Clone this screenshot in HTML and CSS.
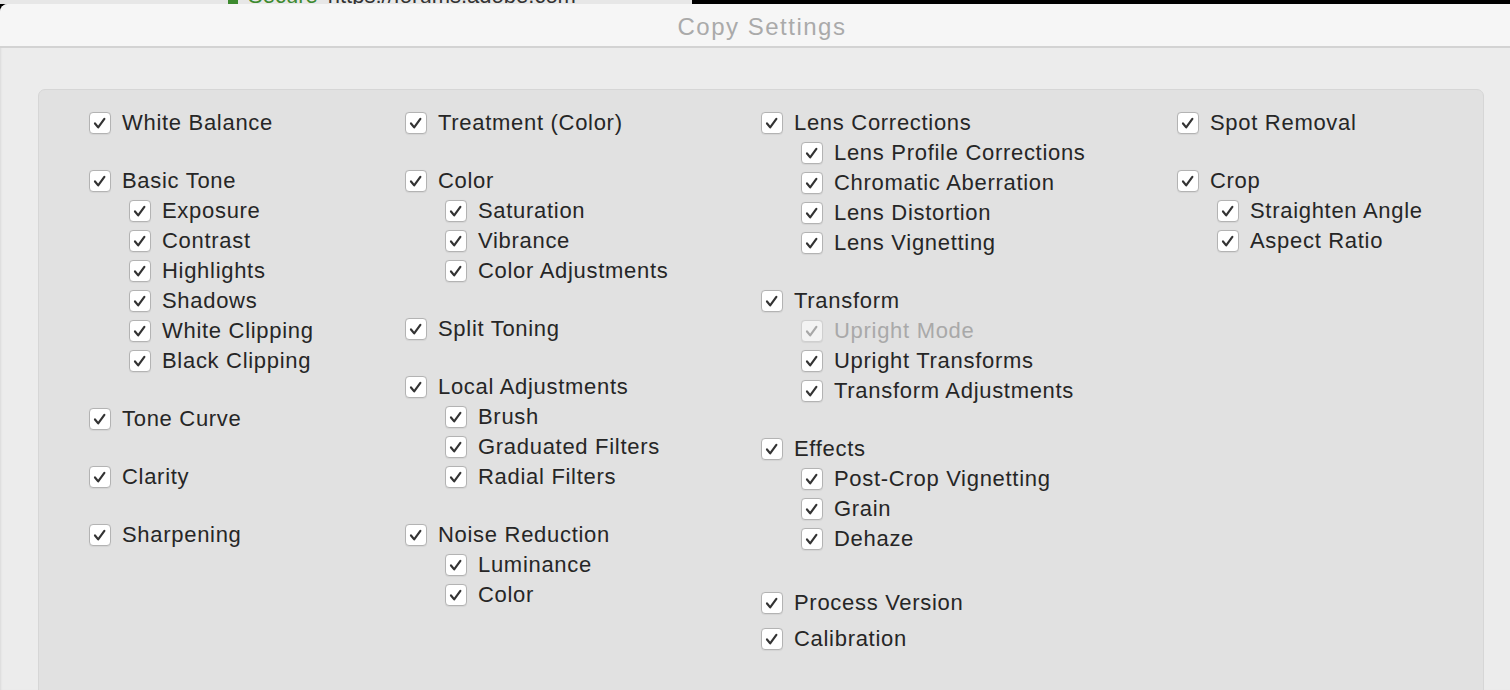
FILE: index.html
```html
<!DOCTYPE html>
<html>
<head>
<meta charset="utf-8">
<link rel="stylesheet" href="styles.css">
<title>Copy Settings</title>
</head>
<body>
<div class="chrome">
  <div class="chrome-left">
    <span class="dot"></span>
    <span class="secure">Secure</span>
    <span class="url">https://forums.adobe.com</span>
  </div>
  <div class="chrome-right"><span class="user">John B. Ellis</span></div>
</div>
<div class="window">
  <div class="titlebar">Copy Settings</div>
  <div class="content">
    <div class="panel">
      <div class="col">
        <div class="group">
          <label class="item"><span class="cb"><svg viewBox="0 0 22 22"><path d="M5.5 11.5 L9 15.8 L15.8 6.5"/></svg></span><span class="lbl">White Balance</span></label>
        </div>
        <div class="group">
          <label class="item"><span class="cb"><svg viewBox="0 0 22 22"><path d="M5.5 11.5 L9 15.8 L15.8 6.5"/></svg></span><span class="lbl">Basic Tone</span></label>
          <div class="sub">
            <label class="item"><span class="cb"><svg viewBox="0 0 22 22"><path d="M5.5 11.5 L9 15.8 L15.8 6.5"/></svg></span><span class="lbl">Exposure</span></label>
            <label class="item"><span class="cb"><svg viewBox="0 0 22 22"><path d="M5.5 11.5 L9 15.8 L15.8 6.5"/></svg></span><span class="lbl">Contrast</span></label>
            <label class="item"><span class="cb"><svg viewBox="0 0 22 22"><path d="M5.5 11.5 L9 15.8 L15.8 6.5"/></svg></span><span class="lbl">Highlights</span></label>
            <label class="item"><span class="cb"><svg viewBox="0 0 22 22"><path d="M5.5 11.5 L9 15.8 L15.8 6.5"/></svg></span><span class="lbl">Shadows</span></label>
            <label class="item"><span class="cb"><svg viewBox="0 0 22 22"><path d="M5.5 11.5 L9 15.8 L15.8 6.5"/></svg></span><span class="lbl">White Clipping</span></label>
            <label class="item"><span class="cb"><svg viewBox="0 0 22 22"><path d="M5.5 11.5 L9 15.8 L15.8 6.5"/></svg></span><span class="lbl">Black Clipping</span></label>
          </div>
        </div>
        <div class="group">
          <label class="item"><span class="cb"><svg viewBox="0 0 22 22"><path d="M5.5 11.5 L9 15.8 L15.8 6.5"/></svg></span><span class="lbl">Tone Curve</span></label>
        </div>
        <div class="group">
          <label class="item"><span class="cb"><svg viewBox="0 0 22 22"><path d="M5.5 11.5 L9 15.8 L15.8 6.5"/></svg></span><span class="lbl">Clarity</span></label>
        </div>
        <div class="group">
          <label class="item"><span class="cb"><svg viewBox="0 0 22 22"><path d="M5.5 11.5 L9 15.8 L15.8 6.5"/></svg></span><span class="lbl">Sharpening</span></label>
        </div>
      </div>

      <div class="col">
        <div class="group">
          <label class="item"><span class="cb"><svg viewBox="0 0 22 22"><path d="M5.5 11.5 L9 15.8 L15.8 6.5"/></svg></span><span class="lbl">Treatment (Color)</span></label>
        </div>
        <div class="group">
          <label class="item"><span class="cb"><svg viewBox="0 0 22 22"><path d="M5.5 11.5 L9 15.8 L15.8 6.5"/></svg></span><span class="lbl">Color</span></label>
          <div class="sub">
            <label class="item"><span class="cb"><svg viewBox="0 0 22 22"><path d="M5.5 11.5 L9 15.8 L15.8 6.5"/></svg></span><span class="lbl">Saturation</span></label>
            <label class="item"><span class="cb"><svg viewBox="0 0 22 22"><path d="M5.5 11.5 L9 15.8 L15.8 6.5"/></svg></span><span class="lbl">Vibrance</span></label>
            <label class="item"><span class="cb"><svg viewBox="0 0 22 22"><path d="M5.5 11.5 L9 15.8 L15.8 6.5"/></svg></span><span class="lbl">Color Adjustments</span></label>
          </div>
        </div>
        <div class="group">
          <label class="item"><span class="cb"><svg viewBox="0 0 22 22"><path d="M5.5 11.5 L9 15.8 L15.8 6.5"/></svg></span><span class="lbl">Split Toning</span></label>
        </div>
        <div class="group">
          <label class="item"><span class="cb"><svg viewBox="0 0 22 22"><path d="M5.5 11.5 L9 15.8 L15.8 6.5"/></svg></span><span class="lbl">Local Adjustments</span></label>
          <div class="sub">
            <label class="item"><span class="cb"><svg viewBox="0 0 22 22"><path d="M5.5 11.5 L9 15.8 L15.8 6.5"/></svg></span><span class="lbl">Brush</span></label>
            <label class="item"><span class="cb"><svg viewBox="0 0 22 22"><path d="M5.5 11.5 L9 15.8 L15.8 6.5"/></svg></span><span class="lbl">Graduated Filters</span></label>
            <label class="item"><span class="cb"><svg viewBox="0 0 22 22"><path d="M5.5 11.5 L9 15.8 L15.8 6.5"/></svg></span><span class="lbl">Radial Filters</span></label>
          </div>
        </div>
        <div class="group">
          <label class="item"><span class="cb"><svg viewBox="0 0 22 22"><path d="M5.5 11.5 L9 15.8 L15.8 6.5"/></svg></span><span class="lbl">Noise Reduction</span></label>
          <div class="sub">
            <label class="item"><span class="cb"><svg viewBox="0 0 22 22"><path d="M5.5 11.5 L9 15.8 L15.8 6.5"/></svg></span><span class="lbl">Luminance</span></label>
            <label class="item"><span class="cb"><svg viewBox="0 0 22 22"><path d="M5.5 11.5 L9 15.8 L15.8 6.5"/></svg></span><span class="lbl">Color</span></label>
          </div>
        </div>
      </div>

      <div class="col">
        <div class="group">
          <label class="item"><span class="cb"><svg viewBox="0 0 22 22"><path d="M5.5 11.5 L9 15.8 L15.8 6.5"/></svg></span><span class="lbl">Lens Corrections</span></label>
          <div class="sub">
            <label class="item"><span class="cb"><svg viewBox="0 0 22 22"><path d="M5.5 11.5 L9 15.8 L15.8 6.5"/></svg></span><span class="lbl">Lens Profile Corrections</span></label>
            <label class="item"><span class="cb"><svg viewBox="0 0 22 22"><path d="M5.5 11.5 L9 15.8 L15.8 6.5"/></svg></span><span class="lbl">Chromatic Aberration</span></label>
            <label class="item"><span class="cb"><svg viewBox="0 0 22 22"><path d="M5.5 11.5 L9 15.8 L15.8 6.5"/></svg></span><span class="lbl">Lens Distortion</span></label>
            <label class="item"><span class="cb"><svg viewBox="0 0 22 22"><path d="M5.5 11.5 L9 15.8 L15.8 6.5"/></svg></span><span class="lbl">Lens Vignetting</span></label>
          </div>
        </div>
        <div class="group">
          <label class="item"><span class="cb"><svg viewBox="0 0 22 22"><path d="M5.5 11.5 L9 15.8 L15.8 6.5"/></svg></span><span class="lbl">Transform</span></label>
          <div class="sub">
            <label class="item disabled"><span class="cb"><svg viewBox="0 0 22 22"><path d="M5.5 11.5 L9 15.8 L15.8 6.5"/></svg></span><span class="lbl">Upright Mode</span></label>
            <label class="item"><span class="cb"><svg viewBox="0 0 22 22"><path d="M5.5 11.5 L9 15.8 L15.8 6.5"/></svg></span><span class="lbl">Upright Transforms</span></label>
            <label class="item"><span class="cb"><svg viewBox="0 0 22 22"><path d="M5.5 11.5 L9 15.8 L15.8 6.5"/></svg></span><span class="lbl">Transform Adjustments</span></label>
          </div>
        </div>
        <div class="group">
          <label class="item"><span class="cb"><svg viewBox="0 0 22 22"><path d="M5.5 11.5 L9 15.8 L15.8 6.5"/></svg></span><span class="lbl">Effects</span></label>
          <div class="sub">
            <label class="item"><span class="cb"><svg viewBox="0 0 22 22"><path d="M5.5 11.5 L9 15.8 L15.8 6.5"/></svg></span><span class="lbl">Post-Crop Vignetting</span></label>
            <label class="item"><span class="cb"><svg viewBox="0 0 22 22"><path d="M5.5 11.5 L9 15.8 L15.8 6.5"/></svg></span><span class="lbl">Grain</span></label>
            <label class="item"><span class="cb"><svg viewBox="0 0 22 22"><path d="M5.5 11.5 L9 15.8 L15.8 6.5"/></svg></span><span class="lbl">Dehaze</span></label>
          </div>
        </div>
        <div class="group group-process">
          <label class="item"><span class="cb"><svg viewBox="0 0 22 22"><path d="M5.5 11.5 L9 15.8 L15.8 6.5"/></svg></span><span class="lbl">Process Version</span></label>
        </div>
        <div class="group group-calib">
          <label class="item"><span class="cb"><svg viewBox="0 0 22 22"><path d="M5.5 11.5 L9 15.8 L15.8 6.5"/></svg></span><span class="lbl">Calibration</span></label>
        </div>
      </div>

      <div class="col">
        <div class="group">
          <label class="item"><span class="cb"><svg viewBox="0 0 22 22"><path d="M5.5 11.5 L9 15.8 L15.8 6.5"/></svg></span><span class="lbl">Spot Removal</span></label>
        </div>
        <div class="group">
          <label class="item"><span class="cb"><svg viewBox="0 0 22 22"><path d="M5.5 11.5 L9 15.8 L15.8 6.5"/></svg></span><span class="lbl">Crop</span></label>
          <div class="sub">
            <label class="item"><span class="cb"><svg viewBox="0 0 22 22"><path d="M5.5 11.5 L9 15.8 L15.8 6.5"/></svg></span><span class="lbl">Straighten Angle</span></label>
            <label class="item"><span class="cb"><svg viewBox="0 0 22 22"><path d="M5.5 11.5 L9 15.8 L15.8 6.5"/></svg></span><span class="lbl">Aspect Ratio</span></label>
          </div>
        </div>
      </div>
    </div>
  </div>
</div>
</body>
</html>
```

FILE: styles.css
```css
html, body {
  margin: 0;
  padding: 0;
  width: 1510px;
  height: 690px;
  overflow: hidden;
  background: #000;
  font-family: "Liberation Sans", Arial, sans-serif;
}

.chrome {
  display: flex;
  height: 4px;
  overflow: hidden;
  line-height: 8px;
  font-size: 22px;
}
.chrome-left {
  width: 692px;
  background: #e7e7e7;
  display: flex;
  align-items: flex-end;
  gap: 10px;
  padding-left: 228px;
  box-sizing: border-box;
  overflow: hidden;
  white-space: nowrap;
}
.chrome-left .dot {
  width: 10px;
  height: 4px;
  background: #3d8a2f;
}
.chrome-left .secure {
  color: #3d8a2f;
  line-height: 0;
  transform: translateY(-8px);
}
.chrome-left .url {
  color: #333;
  line-height: 0;
  transform: translateY(-8px);
}
.chrome-right {
  flex: 1;
  background: #000;
  color: #777;
  padding-left: 175px;
  white-space: nowrap;
  overflow: hidden;
}
.chrome-right .user {
  display: inline-block;
  transform: translateY(-12px);
}

.window {
  background: #ececec;
  border-top-left-radius: 8px;
  height: 686px;
  overflow: hidden;
  box-shadow: inset 2px 0 2px -1px rgba(0,0,0,0.08);
}

.titlebar {
  background: #f6f6f6;
  border-bottom: 2px solid #d3d3d3;
  text-align: center;
  color: #aaaaaa;
  font-size: 24px;
  letter-spacing: 1.5px;
  line-height: 46px;
  box-sizing: border-box;
  height: 44px;
  padding-left: 14px;
}

.content {
  padding: 41px 26px 0 38px;
}

.panel {
  background: #e1e1e1;
  border: 1px solid #d6d6d6;
  border-radius: 7px;
  height: 700px;
  box-sizing: border-box;
  padding: 18px 0 0 50px;
  display: grid;
  grid-template-columns: 316px 356px 416px 1fr;
  align-items: start;
}

.col {
  display: flex;
  flex-direction: column;
}

.group + .group {
  margin-top: 28px;
}
.group.group-process {
  margin-top: 34px;
}
.group.group-calib {
  margin-top: 6px;
}

.sub {
  display: flex;
  flex-direction: column;
  padding-left: 40px;
}

.item {
  display: flex;
  align-items: center;
  gap: 11px;
  height: 30px;
  font-size: 22px;
  letter-spacing: 0.7px;
  color: #262626;
  white-space: nowrap;
}

.cb {
  width: 22px;
  height: 22px;
  box-sizing: border-box;
  background: #ffffff;
  border: 1px solid #b3b3b3;
  border-radius: 4px;
  box-shadow: 0 0.5px 1px rgba(0,0,0,0.06);
  display: flex;
  flex: none;
}
.cb svg {
  width: 20px;
  height: 20px;
}
.cb path {
  fill: none;
  stroke: #333333;
  stroke-width: 2.4;
  stroke-linecap: round;
  stroke-linejoin: round;
}

.item.disabled {
  color: #a9a9a9;
}
.item.disabled .cb {
  border-color: #cfcfcf;
  background: #f3f3f3;
}
.item.disabled .cb path {
  stroke: #a8a8a8;
}
```
